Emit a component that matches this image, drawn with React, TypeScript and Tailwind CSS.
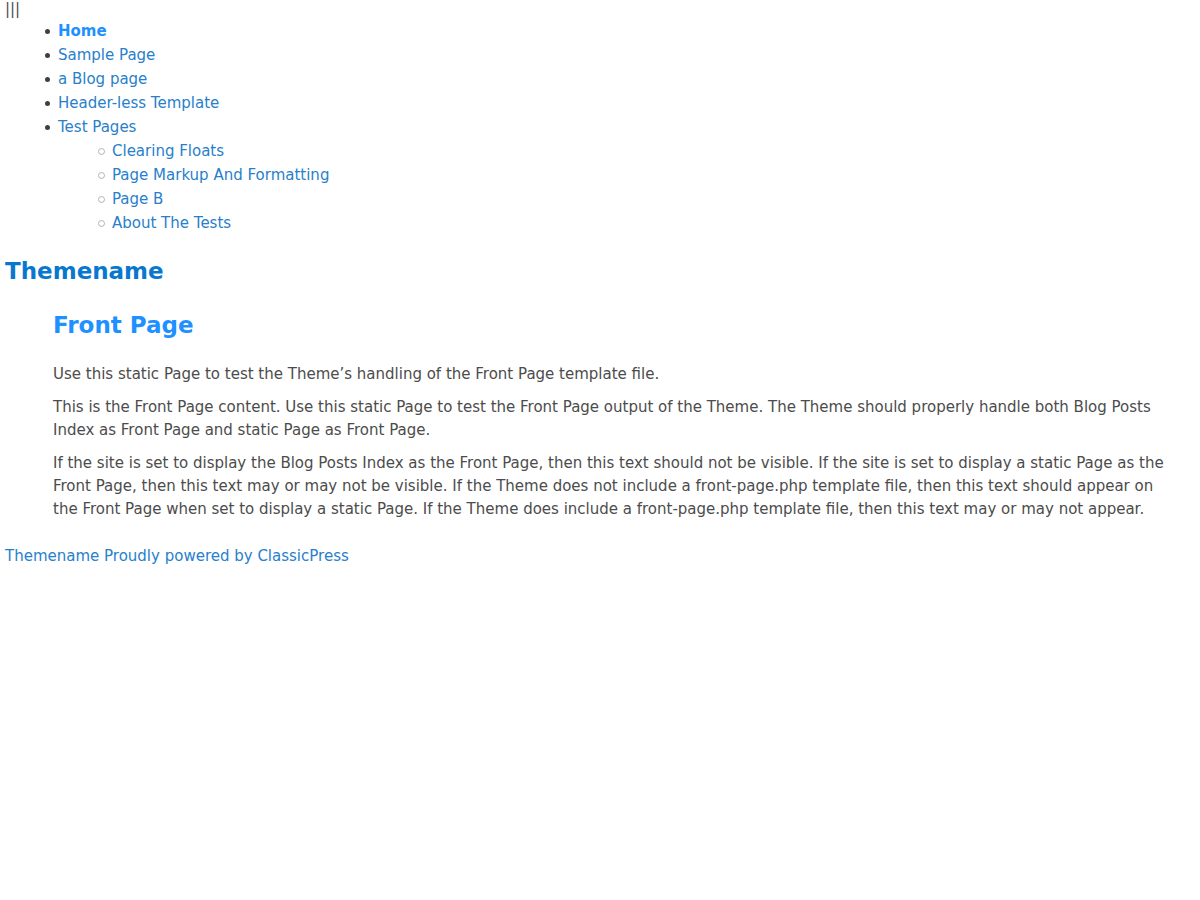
const link = "text-[#2880cc] hover:underline";

const disc =
  "flex items-center gap-2 before:size-[5px] before:rounded-full before:bg-[#404040]";
const circle =
  "flex items-center gap-[7px] before:size-[7px] before:rounded-full before:border before:border-[#b4b4b4]";

const pages = ["Sample Page", "a Blog page", "Header-less Template"];
const testPages = ["Clearing Floats", "Page Markup And Formatting", "Page B", "About The Tests"];

export default function App() {
  return (
    <div className="px-[5px] font-['DejaVu_Sans',sans-serif] text-[15px] leading-[23px] text-[#4c4c4c]">
      <header>
        <div className="leading-[19px]">|||</div>
        <nav aria-label="Main" className="leading-6">
          <ul className="pl-10">
            <li>
              <div className={disc}>
                <a href="#home" className="font-bold text-[#1e90ff]">Home</a>
              </div>
            </li>
            {pages.map((name) => (
              <li key={name}>
                <div className={disc}>
                  <a href="#page" className={link}>{name}</a>
                </div>
              </li>
            ))}
            <li>
              <div className={disc}>
                <a href="#tests" className={link}>Test Pages</a>
              </div>
              <ul className="pl-[53px]">
                {testPages.map((name) => (
                  <li key={name}>
                    <div className={circle}>
                      <a href="#test" className={link}>{name}</a>
                    </div>
                  </li>
                ))}
              </ul>
            </li>
          </ul>
        </nav>
        <h1 className="mt-5 text-[23px] leading-8 font-bold">
          <a href="#home" className="text-[#0878cf]">Themename</a>
        </h1>
      </header>
      <main className="pr-5 pl-12">
        <h2 className="mt-[22px] text-[23px] leading-8 font-bold text-[#1e90ff]">Front Page</h2>
        <div className="mt-[22px] flex flex-col gap-2.5">
          <p>Use this static Page to test the Theme’s handling of the Front Page template file.</p>
          <p>
            This is the Front Page content. Use this static Page to test the Front Page output of the Theme. The Theme should properly handle both Blog Posts Index as Front Page and static Page as Front Page.
          </p>
          <p>
            If the site is set to display the Blog Posts Index as the Front Page, then this text should not be visible. If the site is set to display a static Page as the Front Page, then this text may or may not be visible. If the Theme does not include a front-page.php template file, then this text should appear on the Front Page when set to display a static Page. If the Theme does include a front-page.php template file, then this text may or may not appear.
          </p>
        </div>
      </main>
      <footer className="mt-6">
        <a href="#home" className={link}>Themename Proudly powered by ClassicPress</a>
      </footer>
    </div>
  );
}
